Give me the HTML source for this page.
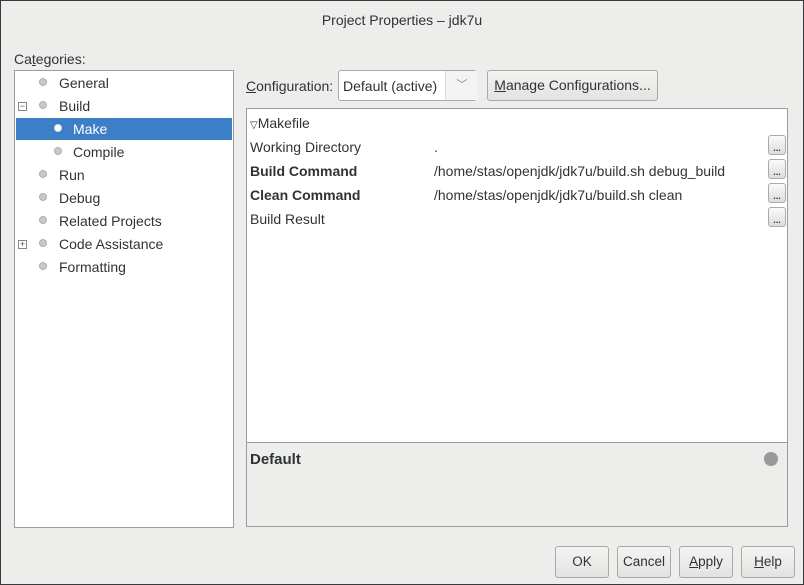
<!DOCTYPE html>
<html><head><style>
body{margin:0;width:804px;height:585px;overflow:hidden;font-family:"Liberation Sans","DejaVu Sans",sans-serif;font-size:14px;color:#2e3436}
#win{position:absolute;left:0;top:0;width:804px;height:585px;box-shadow:inset 0 0 0 1px #3a3a3a;background:#edeeec}
.a{position:absolute;white-space:nowrap}
.list{position:absolute;left:14px;top:70px;width:218px;height:456px;background:#fff;border:1px solid #9c9c9c}
.row{position:absolute;height:22px;line-height:22px}
.dot{position:absolute;width:6px;height:6px;border-radius:50%;background:#c8c8c8;border:1px solid #b0b0b0}
.btn{position:absolute;border:1px solid #a9a9a9;border-radius:3px;background:linear-gradient(#f4f4f3,#e2e2e0);text-align:center;box-sizing:border-box}
.sb{position:absolute;left:768px;width:18px;height:20px;border:1px solid #aaa;border-radius:3px;background:linear-gradient(#fbfbfb,#dcdcdc);box-sizing:border-box;font-size:9px;line-height:24px;text-align:center;font-weight:bold}
.box{position:absolute;width:7px;height:7px;border:1px solid #888;font-size:9px;line-height:7px;text-align:center;color:#555}
.bb{font-size:13.5px}
</style></head><body><div id="win">
<div class="a" style="left:0;width:804px;top:12px;text-align:center;font-size:14px">Project Properties – jdk7u</div>
<div class="a" style="left:14px;top:51px">Ca<u>t</u>egories:</div>
<div class="list">
 <div class="row" style="left:1px;top:47px;width:216px;background:#3c7fc7"></div>
 <div class="dot" style="left:24px;top:7px"></div><div class="a" style="left:44px;top:4px">General</div>
 <div class="box" style="left:3px;top:31px">−</div>
 <div class="dot" style="left:24px;top:30px"></div><div class="a" style="left:44px;top:27px">Build</div>
 <div class="dot" style="left:39px;top:53px;background:#fff;border-color:#ddd"></div><div class="a" style="left:58px;top:50px;color:#fff">Make</div>
 <div class="dot" style="left:39px;top:76px"></div><div class="a" style="left:58px;top:73px">Compile</div>
 <div class="dot" style="left:24px;top:99px"></div><div class="a" style="left:44px;top:96px">Run</div>
 <div class="dot" style="left:24px;top:122px"></div><div class="a" style="left:44px;top:119px">Debug</div>
 <div class="dot" style="left:24px;top:145px"></div><div class="a" style="left:44px;top:142px">Related Projects</div>
 <div class="box" style="left:3px;top:169px">+</div>
 <div class="dot" style="left:24px;top:168px"></div><div class="a" style="left:44px;top:165px">Code Assistance</div>
 <div class="dot" style="left:24px;top:191px"></div><div class="a" style="left:44px;top:188px">Formatting</div>
</div>
<div class="a" style="left:246px;top:78px"><u>C</u>onfiguration:</div>
<div class="btn" style="left:338px;top:70px;width:139px;height:31px;background:#fff;text-align:left;padding:7px 0 0 4px">Default (active)<span style="position:absolute;left:106px;top:0;height:29px;border-left:1px solid #ddd;width:32px;background:#f3f3f3;color:#888;text-align:center;line-height:29px;font-size:11px">﹀</span></div>
<div class="btn" style="left:487px;top:70px;width:171px;height:31px;line-height:29px"><u>M</u>anage Configurations...</div>
<div style="position:absolute;left:246px;top:108px;width:540px;height:417px;border:1px solid #9c9c9c;background:#edeeec">
 <div style="position:absolute;left:0;top:0;width:540px;height:333px;background:#fff;border-bottom:1px solid #9c9c9c"></div>
 <div class="a" style="left:3px;top:6px"><span style="font-size:10px">▽</span>Makefile</div>
 <div class="a" style="left:3px;top:30px">Working Directory</div>
 <div class="a" style="left:3px;top:54px;font-weight:bold">Build Command</div>
 <div class="a" style="left:3px;top:78px;font-weight:bold">Clean Command</div>
 <div class="a" style="left:3px;top:102px">Build Result</div>
 <div class="a" style="left:187px;top:30px">.</div>
 <div class="a" style="left:187px;top:54px">/home/stas/openjdk/jdk7u/build.sh debug_build</div>
 <div class="a" style="left:187px;top:78px">/home/stas/openjdk/jdk7u/build.sh clean</div>
 <div class="a" style="left:3px;top:342px;font-weight:bold;font-size:15px">Default</div>
 <div style="position:absolute;left:517px;top:343px;width:14px;height:14px;border-radius:50%;background:#999"></div>
</div>
<div class="sb" style="top:135px">...</div>
<div class="sb" style="top:159px">...</div>
<div class="sb" style="top:183px">...</div>
<div class="sb" style="top:207px">...</div>
<div class="btn bb" style="left:555px;top:546px;width:54px;height:32px;line-height:30px">OK</div>
<div class="btn bb" style="left:617px;top:546px;width:54px;height:32px;line-height:30px">Cancel</div>
<div class="btn bb" style="left:679px;top:546px;width:54px;height:32px;line-height:30px"><u>A</u>pply</div>
<div class="btn bb" style="left:741px;top:546px;width:54px;height:32px;line-height:30px"><u>H</u>elp</div>
</div></body></html>
